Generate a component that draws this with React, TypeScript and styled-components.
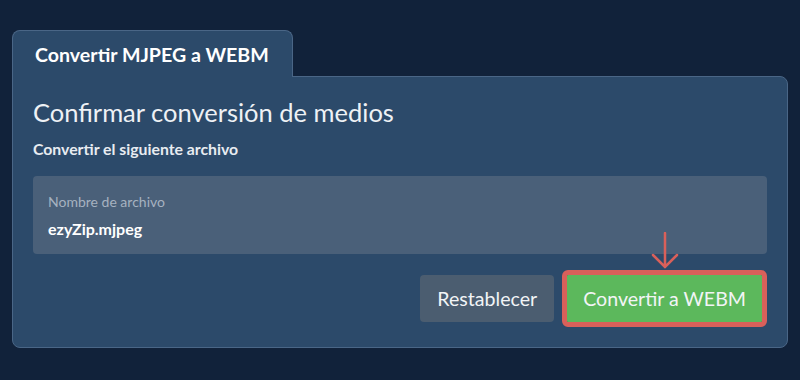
import React from 'react'
import styled, { createGlobalStyle } from 'styled-components'

const GlobalStyle = createGlobalStyle`
    html, body {
        margin: 0;
        padding: 0;
        background-color: #11223a;
        font-family: "Lato", "Open Sans", sans-serif;
        color: #fff;
    }
    * {
        box-sizing: border-box;
    }
`

const SPage = styled.div`
    width: 800px;
    height: 380px;
    padding: 30px 12px 0 12px;
    display: flex;
    flex-direction: column;
`

const STab = styled.div`
    align-self: flex-start;
    height: 47px;
    padding: 0 23px 0 22px;
    display: flex;
    align-items: center;
    background-color: #2c4a6a;
    border: 1px solid #4a6686;
    border-bottom: none;
    border-radius: 8px 8px 0 0;
    font-size: 19.6px;
    font-weight: 700;
    margin-bottom: -1px;
    position: relative;
    z-index: 1;
`

const SPanel = styled.div`
    background-color: #2c4a6a;
    border: 1px solid #4a6686;
    border-radius: 0 8px 8px 8px;
    padding: 19px 20px 25px 20px;
    display: flex;
    flex-direction: column;
`

const STitle = styled.h2`
    margin: 0;
    font-size: 25.5px;
    font-weight: 400;
    line-height: 32px;
    color: #eef1f5;
`

const SSubtitle = styled.p`
    margin: 11px 0 0 0;
    font-size: 15.8px;
    font-weight: 700;
    line-height: 20px;
    color: #e8ecf1;
`

const SField = styled.div`
    margin-top: 17px;
    height: 78px;
    background-color: #4a6079;
    border-radius: 4px;
    padding: 17px 15px 0 15px;
    display: flex;
    flex-direction: column;
    gap: 9px;
`

const SFieldLabel = styled.span`
    font-size: 14px;
    line-height: 18px;
    color: #a6b2c0;
`

const SFieldValue = styled.span`
    font-size: 16px;
    font-weight: 700;
    line-height: 18px;
    color: #fff;
`

const SActions = styled.div`
    margin-top: 21px;
    display: flex;
    justify-content: flex-end;
    align-items: center;
    gap: 13px;
`

const SButton = styled.button<{ $primary?: boolean }>`
    position: relative;
    height: 47px;
    padding: 0 ${p => p.$primary ? '16px' : '17px'};
    margin-right: ${p => p.$primary ? '5px' : '0'};
    border: none;
    white-space: nowrap;
    font-family: "Lato", "Open Sans", sans-serif;
    font-size: 19.6px;
    color: #f2f4f6;
    background-color: ${p => p.$primary ? '#5cb85c' : '#4b5d70'};
    outline: ${p => p.$primary ? '5px solid #d9605a' : 'none'};
    outline-offset: 0;
    border-radius: ${p => p.$primary ? '1px' : '4px'};
    cursor: pointer;
`

const SArrow = styled.svg`
    position: absolute;
    left: 50%;
    bottom: 100%;
    margin-left: -14px;
    margin-bottom: 6px;
`

const App = () => {
    return (
        <>
            <GlobalStyle />
            <SPage>
                <STab>Convertir MJPEG a WEBM</STab>
                <SPanel>
                    <STitle>Confirmar conversión de medios</STitle>
                    <SSubtitle>Convertir el siguiente archivo</SSubtitle>
                    <SField>
                        <SFieldLabel>Nombre de archivo</SFieldLabel>
                        <SFieldValue>ezyZip.mjpeg</SFieldValue>
                    </SField>
                    <SActions>
                        <SButton>Restablecer</SButton>
                        <SButton $primary>
                            <SArrow width="28" height="37" viewBox="0 0 28 37">
                                <path d="M14 1 V35 M2 23 L14 35 L26 23" fill="none" stroke="#d9605a" strokeWidth="2.5" strokeLinecap="round" strokeLinejoin="miter" />
                            </SArrow>
                            Convertir a WEBM
                        </SButton>
                    </SActions>
                </SPanel>
            </SPage>
        </>
    )
}

export default App
